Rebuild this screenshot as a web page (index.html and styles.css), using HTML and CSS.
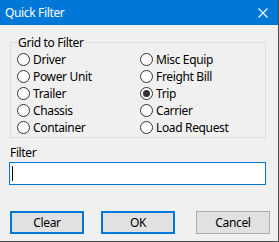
FILE: index.html
```html
<!DOCTYPE html>
<html>
<head>
    <meta charset="UTF-8">
    <title>Quick Filter</title>
    <link rel="stylesheet" href="styles.css">
</head>
<body>
    <div class="window">
        <div class="titlebar">
            <span class="title">Quick Filter</span>
            <svg class="close" width="10" height="10" viewBox="0 0 10 10">
                <path d="M0.5 0.5 L9.5 9.5 M9.5 0.5 L0.5 9.5" stroke="#fff" stroke-width="1.1" fill="none"/>
            </svg>
        </div>

        <div class="content">
            <fieldset class="group">
                <legend>Grid to Filter</legend>
                <div class="options">
                    <label class="option"><span class="radio"></span>Driver</label>
                    <label class="option"><span class="radio"></span>Misc Equip</label>
                    <label class="option"><span class="radio"></span>Power Unit</label>
                    <label class="option"><span class="radio"></span>Freight Bill</label>
                    <label class="option"><span class="radio"></span>Trailer</label>
                    <label class="option"><span class="radio checked"></span>Trip</label>
                    <label class="option"><span class="radio"></span>Chassis</label>
                    <label class="option"><span class="radio"></span>Carrier</label>
                    <label class="option"><span class="radio"></span>Container</label>
                    <label class="option"><span class="radio"></span>Load Request</label>
                </div>
            </fieldset>

            <div class="filter-label">Filter</div>
            <div class="textbox"><span class="caret"></span></div>

            <div class="actions">
                <button class="btn btn-focus">Clear</button>
                <button class="btn btn-focus">OK</button>
                <button class="btn btn-cancel">Cancel</button>
            </div>
        </div>
    </div>
</body>
</html>
```

FILE: styles.css
```css
body {
    margin: 0;
    background-color: #fff;
    font-family: "Noto Sans", "Open Sans", sans-serif;
    font-size: 12px;
    letter-spacing: -0.35px;
    color: #000;
}
.window {
    width: 279px;
    height: 242px;
    box-sizing: border-box;
    background-color: #f0f0f0;
    border-right: 1px solid #4a4a4a;
    border-bottom: 1px solid #4a4a4a;
}
.titlebar {
    height: 25px;
    background-color: #0078d7;
    color: #fff;
    display: flex;
    align-items: center;
    justify-content: space-between;
    padding: 0 10px 0 5px;
}
.close {
    display: block;
    margin-top: 1px;
}
.content {
    padding: 10px 12px 0 10px;
}
.group {
    margin: 0;
    padding: 0 6px 1px 6px;
    border: 1px solid #dcdcdc;
}
.group legend {
    padding: 0 1px;
    margin-left: 0;
    line-height: 15px;
}
.options {
    display: grid;
    grid-template-columns: 123px 1fr;
    grid-auto-rows: 17px;
    padding-top: 1px;
}
.option {
    display: flex;
    align-items: center;
    gap: 3px;
    white-space: nowrap;
}
.radio {
    width: 13px;
    height: 13px;
    box-sizing: border-box;
    border: 1px solid #333;
    border-radius: 50%;
    background-color: #fff;
    display: flex;
    align-items: center;
    justify-content: center;
    flex: none;
}
.radio.checked::after {
    content: "";
    width: 7px;
    height: 7px;
    border-radius: 50%;
    background-color: #333;
}
.filter-label {
    margin-top: 7px;
    line-height: 15px;
}
.textbox {
    margin: 2px 0 0 -1px;
    height: 23px;
    box-sizing: border-box;
    border: 1px solid #0078d7;
    background-color: #fff;
    padding: 3px 0 0 2px;
}
.caret {
    display: block;
    width: 1px;
    height: 15px;
    background-color: #000;
}
.actions {
    display: flex;
    gap: 17px;
    margin-top: 26px;
    margin-right: -4px;
}
.btn {
    width: 74px;
    height: 23px;
    box-sizing: border-box;
    background-color: #e1e1e1;
    border: 1px solid #adadad;
    font-family: inherit;
    font-size: 12px;
    letter-spacing: inherit;
    color: #000;
    padding: 0;
}
.btn-focus {
    border: 2px solid #0078d7;
}
.btn-cancel {
    margin-left: auto;
}
```
